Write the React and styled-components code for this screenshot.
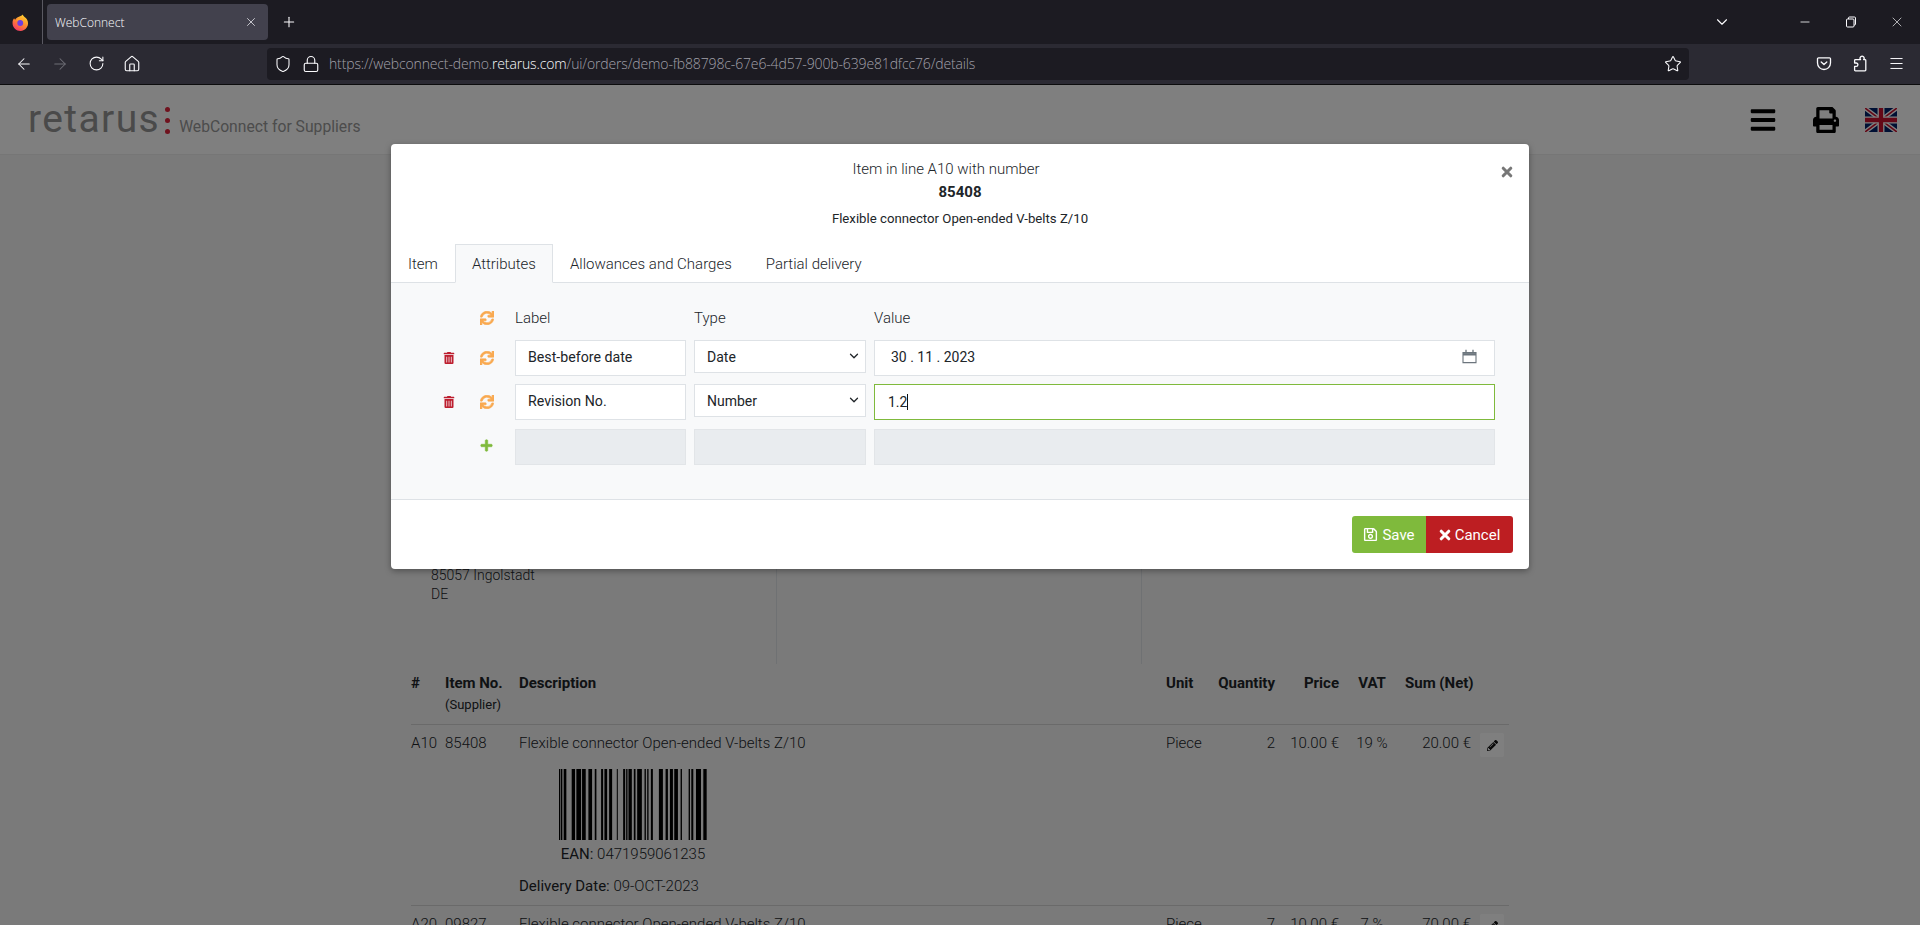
import React from "react";
import styled, { createGlobalStyle } from "styled-components";
import { ArrowLeft, ArrowRight, RotateCw, Home, Shield, Lock, Star, X, Plus, ChevronDown, Minus, Menu } from "lucide-react";
import { FaBars, FaPrint, FaSync, FaTrashAlt, FaPlus, FaRegSave, FaPencilAlt } from "react-icons/fa";

const Global = createGlobalStyle`
  html, body { margin: 0; padding: 0; height: 100%; overflow: hidden; }
  body { font-family: Roboto, "Liberation Sans", sans-serif; font-size: 15px; font-weight: 300; color: #212529; background: #fff; }
  * { box-sizing: border-box; }
`;

const Screen = styled.div`display:flex;flex-direction:column;height:925px;width:1920px;overflow:hidden;`;

/* browser chrome */
const TabBar = styled.div`display:flex;align-items:center;height:44px;background:#1c1b22;color:#fbfbfe;font-family:"Open Sans",sans-serif;flex:none;`;
const BrandSlot = styled.div`width:43px;height:44px;display:flex;align-items:center;justify-content:flex-start;padding-left:12px;border-right:1px solid #5a5962;flex:none;`;
const Tab = styled.div`margin-left:4px;width:221px;height:36px;background:#42414d;border-radius:4px;display:flex;align-items:center;justify-content:space-between;padding:0 10px 0 8px;font-size:12px;flex:none;`;
const TabClose = styled.span`display:flex;color:#e0e0e6;`;
const Slot = styled.div`width:${p => p.$w || 36}px;height:32px;display:flex;align-items:center;justify-content:center;flex:none;color:${p => p.$dim ? "#6f6e77" : "#fbfbfe"};`;
const NewTab = styled(Slot)`margin-left:5px;`;
const WindowControls = styled.div`margin-left:auto;display:flex;align-items:center;`;
const ListTabs = styled(Slot)`margin-right:42px;`;
const NavBar = styled.div`display:flex;align-items:center;height:41px;background:#2b2a33;border-bottom:1px solid #0c0c0d;padding:0 6px 1px;flex:none;font-family:"Open Sans",sans-serif;`;
const UrlBar = styled.div`flex:1;height:32px;margin:0 117px;background:#1c1b22;border-radius:4px;display:flex;align-items:center;color:#fbfbfe;padding-left:7px;`;
const UrlIcon = styled.span`display:flex;width:28px;flex:none;justify-content:flex-start;`;
const UrlText = styled.div`font-size:14px;color:#a2a1aa;letter-spacing:-0.01em;white-space:nowrap;margin-left:-1px;`;
const UrlHost = styled.span`color:#fbfbfe;`;
const UrlStar = styled.span`margin-left:auto;display:flex;margin-right:7px;`;

/* page */
const Page = styled.div`position:relative;flex:1;overflow:hidden;background:#f4f4f4;`;
const SiteHeader = styled.header`height:70px;background:#fff;border-bottom:1px solid #ececec;display:flex;align-items:center;padding:0 23px 0 28px;`;
const Logo = styled.div`display:flex;align-items:flex-end;margin-top:-2px;`;
const LogoWord = styled.span`font-size:39px;line-height:38px;font-weight:400;color:#949494;letter-spacing:1.4px;`;
const LogoDots = styled.span`display:flex;flex-direction:column;gap:6px;margin:0 9px 4px 5px;`;
const LogoDot = styled.i`display:block;width:5px;height:5px;border-radius:50%;background:#e0243c;`;
const LogoTag = styled.span`font-size:15.7px;line-height:22px;font-weight:400;color:#989898;`;
const HeaderTools = styled.div`margin-left:auto;display:flex;align-items:center;gap:36px;color:#000;`;
const PrintTool = styled.span`display:flex;margin-right:-10px;`;

const Main = styled.main`width:1098px;margin:0 auto;background:#f4f4f4;`;
const Addresses = styled.div`display:grid;grid-template-columns:366px 365px 1fr;height:509px;`;
const AddressCol = styled.div`padding:411px 0 0 20px;line-height:19px;font-size:14px;border-right:${p => p.$last ? "0" : "1px solid #dee2e6"};`;
const LineGrid = styled.div`display:grid;grid-template-columns:34px 74px 647px 52px 57px 64px 66px 66px 38px;line-height:21px;border-bottom:1px solid #d4d4d4;padding:${p => p.$head ? "9px 0 8px" : "8px 0"};`;
const HeadCell = styled.div`font-weight:700;text-align:${p => p.$align || "left"};white-space:nowrap;`;
const SumHead = styled(HeadCell)`padding-right:1px;`;
const SubHead = styled.div`font-weight:400;font-size:13px;line-height:22px;`;
const Cell = styled.div`text-align:${p => p.$align || "left"};white-space:nowrap;`;
const Barcode = styled.div`width:228px;margin-top:15px;text-align:center;line-height:21px;`;
const BarSvg = styled.svg`display:block;margin:0 auto 4px;`;
const EanLabel = styled.span`font-weight:400;`;
const DeliveryLine = styled.div`margin-top:11px;`;
const DeliveryLabel = styled.span`font-weight:400;`;
const EditButton = styled.span`display:flex;align-items:center;justify-content:center;width:24px;height:24px;margin-left:9px;background:#fff;border-radius:2px;color:#111;`;

/* modal */
const Overlay = styled.div`position:absolute;inset:0;background:rgba(0,0,0,.5);display:flex;justify-content:center;padding-top:59px;`;
const Modal = styled.div`position:relative;width:1138px;height:425px;background:#fff;border-radius:4px;box-shadow:0 2px 6px rgba(0,0,0,.35);display:flex;flex-direction:column;overflow:hidden;`;
const ModalHead = styled.div`height:100px;padding-top:15px;text-align:center;flex:none;`;
const TitleLine = styled.div`line-height:21px;padding-right:28px;`;
const TitleCode = styled.div`line-height:21px;margin-top:2px;font-weight:700;`;
const TitleDesc = styled.div`font-size:13.2px;line-height:18px;margin-top:7px;font-weight:400;`;
const CloseBtn = styled.span`position:absolute;top:22px;right:16px;display:flex;color:#777;`;
const Tabs = styled.div`display:flex;height:39px;border-bottom:1px solid #dee2e6;flex:none;`;
const TabLink = styled.div`height:39px;padding:0 16px;display:flex;align-items:center;border:1px solid ${p => p.$active ? "#dee2e6" : "transparent"};${p => p.$active ? "border-bottom-color:#f8f9fa;background:#f8f9fa;" : ""}`;
const ModalBody = styled.div`height:217px;background:#f8f9fa;border-bottom:1px solid #dee2e6;padding:24px 0 0 43px;flex:none;`;
const AttrGrid = styled.div`display:grid;grid-template-columns:30px 35px 171px 172px 621px;column-gap:8px;row-gap:8px;grid-template-rows:25px 36px 37px 36px;align-items:start;`;
const ColLabel = styled.div`line-height:22px;`;
const IconCell = styled.div`height:${p => p.$h || 35}px;display:flex;align-items:center;justify-content:${p => p.$pad ? "flex-start" : "center"};padding-left:${p => p.$pad ? 8 : 0}px;color:${p => p.$color};`;
const Field = styled.input`display:block;width:100%;height:36px;border:1px solid #dee2e6;background:#fff;padding:0 12px 2px;font:400 14.2px Roboto,sans-serif;color:#212529;outline:none;`;
const SelectWrap = styled.div`position:relative;height:33px;`;
const Select = styled.select`display:block;width:100%;height:33px;border:1px solid #dee2e6;background:#fff;padding:0 12px;font:400 14px Roboto,sans-serif;color:#212529;appearance:none;outline:none;border-radius:0;`;
const SelectChevron = styled.span`position:absolute;right:5px;top:9px;display:flex;color:#212529;pointer-events:none;`;
const ValueBox = styled.div`height:36px;border:1px solid ${p => p.$focus ? "#7fba3c" : "#dee2e6"};background:#fff;display:flex;align-items:center;justify-content:space-between;padding:0 ${p => p.$focus ? 12 : 17}px ${p => p.$focus ? 0 : 3}px ${p => p.$focus ? 13 : 16}px;font-weight:400;font-size:14px;`;
const Caret = styled.i`display:inline-block;width:1px;height:16px;background:#111;vertical-align:-3px;`;
const Disabled = styled.div`height:36px;background:#e9ecef;border:1px solid #e2e5e8;`;
const ModalFoot = styled.div`flex:1;display:flex;justify-content:flex-end;padding:16px 16px 0 0;`;
const Button = styled.div`height:37px;display:flex;align-items:center;justify-content:center;gap:4px;color:#fff;font-weight:400;font-size:15px;width:${p => p.$w}px;background:${p => p.$bg};border-radius:${p => p.$radius};`;

/* icons */
const Firefox = () => (
  <svg width="17" height="17" viewBox="0 0 32 32">
    <defs>
      <linearGradient id="ffa" x1="0.75" y1="0.05" x2="0.2" y2="1"><stop offset="0" stopColor="#ffd22e"/><stop offset=".5" stopColor="#ff8232"/><stop offset="1" stopColor="#f5306c"/></linearGradient>
    </defs>
    <path d="M20 1c1 4 6 5 8 9 3 5 3 11 0 15-3 5-8 7-12 7C8 32 1 26 1 17c0-4 1-7 3-9 0 1 1 2 2 3 1-3 4-5 7-6 3-1 6-2 7-4z" fill="url(#ffa)"/>
    <circle cx="15.5" cy="17" r="5.5" fill="#6f3fe0"/>
    <path d="M9 13c3-3 9-3 12 0 1 1 2 3 2 5 1-3 1-7-2-9-3-2-7-2-9 0-2 1-3 2-3 4z" fill="#ffab2e"/>
  </svg>
);
const RestoreIcon = () => (
  <svg width="12" height="12" viewBox="0 0 12 12" fill="none" stroke="#fbfbfe" strokeWidth="1">
    <rect x="1.5" y="3" width="7.5" height="8" rx="1"/><path d="M3.5 3V2a1 1 0 0 1 1-1h5a1 1 0 0 1 1 1v6a1 1 0 0 1-1 1h-.5"/>
  </svg>
);
const PocketIcon = () => (
  <svg width="16" height="16" viewBox="0 0 16 16" fill="none" stroke="#fbfbfe" strokeWidth="1.3" strokeLinecap="round" strokeLinejoin="round">
    <path d="M2.5 1.8h11a1 1 0 0 1 1 1V7a6.5 6.5 0 0 1-13 0V2.8a1 1 0 0 1 1-1z"/><path d="M5.2 6l2.8 2.6L10.8 6"/>
  </svg>
);
const PuzzleIcon = () => (
  <svg width="16" height="17" viewBox="0 0 16 17" fill="none" stroke="#fbfbfe" strokeWidth="1.3" strokeLinejoin="round">
    <path d="M8.6 4.6a2 2 0 1 1 3 0h1.4a.8.8 0 0 1 .8.8V15a.8.8 0 0 1-.8.8H3.4a.8.8 0 0 1-.8-.8v-3.6h1.6a1.7 1.7 0 1 0 0-3.4H2.6V5.4a.8.8 0 0 1 .8-.8z"/>
  </svg>
);
const CalendarIcon = () => (
  <svg width="15" height="15" viewBox="0 0 15 15" fill="none" stroke="#6c757d">
    <path d="M1 3.6h13v10H1z" strokeWidth="1.1"/><path d="M1 5.3h13" strokeWidth="2.4"/><path d="M4 .8v2.4M11 .8v2.4" strokeWidth="1.3"/>
  </svg>
);
const ChunkyX = ({ size }) => (
  <svg width={size} height={size} viewBox="0 0 14 14" fill="none" stroke="currentColor" strokeWidth="3.6" strokeLinecap="round">
    <path d="M2.6 2.6l8.8 8.8M11.4 2.6l-8.8 8.8"/>
  </svg>
);
const UkFlag = () => (
  <svg width="32" height="24" viewBox="0 0 60 45">
    <rect width="60" height="45" fill="#012169"/>
    <path d="M0 0l60 45M60 0L0 45" stroke="#fff" strokeWidth="8"/>
    <path d="M0 0l60 45M60 0L0 45" stroke="#c8102e" strokeWidth="3"/>
    <path d="M30 0v45M0 22.5h60" stroke="#fff" strokeWidth="13"/>
    <path d="M30 0v45M0 22.5h60" stroke="#c8102e" strokeWidth="8"/>
  </svg>
);
const BARS = [[0,4],[6,4],[14,8],[38,10],[52,14],[69,11],[88,11],[107,5],[126,6],[136,8],[150,9],[173,3],[192,6],[201,4],[208,10],[224,5],[234,14],[256,4],[264,4],[275,6],[299,12],[319,7],[332,9],[345,11],[364,4],[388,4],[396,6],[410,15],[432,10]];
const EanBars = () => (
  <BarSvg width="148" height="71" viewBox="0 0 443 71" preserveAspectRatio="none">
    {BARS.map(([x, w]) => <rect key={x} x={x} y="0" width={w} height="71" fill="#000" />)}
  </BarSvg>
);

export default function App() {
  return (
    <Screen>
      <Global />
      <TabBar>
        <BrandSlot><Firefox /></BrandSlot>
        <Tab>WebConnect<TabClose><X size={14} strokeWidth={1.4} /></TabClose></Tab>
        <NewTab $w={32}><Plus size={16} strokeWidth={1.6} /></NewTab>
        <WindowControls>
          <ListTabs><ChevronDown size={18} strokeWidth={1.5} /></ListTabs>
          <Slot $w={46}><Minus size={14} strokeWidth={1.4} /></Slot>
          <Slot $w={46}><RestoreIcon /></Slot>
          <Slot $w={46}><X size={16} strokeWidth={1} /></Slot>
        </WindowControls>
      </TabBar>
      <NavBar>
        <Slot><ArrowLeft size={18} strokeWidth={1.4} /></Slot>
        <Slot $dim><ArrowRight size={18} strokeWidth={1.4} /></Slot>
        <Slot><RotateCw size={17} strokeWidth={1.5} /></Slot>
        <Slot><Home size={18} strokeWidth={1.5} /></Slot>
        <UrlBar>
          <UrlIcon><Shield size={18} strokeWidth={1.4} /></UrlIcon>
          <UrlIcon><Lock size={18} strokeWidth={1.5} /></UrlIcon>
          <UrlText>https://webconnect-demo.<UrlHost>retarus.com</UrlHost>/ui/orders/demo-fb88798c-67e6-4d57-900b-639e81dfcc76/details</UrlText>
          <UrlStar><Star size={18} strokeWidth={1.4} /></UrlStar>
        </UrlBar>
        <Slot><PocketIcon /></Slot>
        <Slot><PuzzleIcon /></Slot>
        <Slot><Menu size={17} strokeWidth={1.4} /></Slot>
      </NavBar>
      <Page>
        <SiteHeader>
          <Logo>
            <LogoWord>retarus</LogoWord>
            <LogoDots><LogoDot /><LogoDot /><LogoDot /></LogoDots>
            <LogoTag>WebConnect for Suppliers</LogoTag>
          </Logo>
          <HeaderTools>
            <FaBars size={28} />
            <PrintTool><FaPrint size={26} /></PrintTool>
            <UkFlag />
          </HeaderTools>
        </SiteHeader>
        <Main>
          <Addresses>
            <AddressCol>85057 Ingolstadt<br />DE</AddressCol>
            <AddressCol />
            <AddressCol $last />
          </Addresses>
          <LineGrid $head>
            <HeadCell>#</HeadCell>
            <HeadCell>Item No.<SubHead>(Supplier)</SubHead></HeadCell>
            <HeadCell>Description</HeadCell>
            <HeadCell>Unit</HeadCell>
            <HeadCell $align="right">Quantity</HeadCell>
            <HeadCell $align="right">Price</HeadCell>
            <HeadCell $align="center">VAT</HeadCell>
            <SumHead $align="right">Sum (Net)</SumHead>
            <div />
          </LineGrid>
          <LineGrid>
            <Cell>A10</Cell>
            <Cell>85408</Cell>
            <Cell>
              Flexible connector Open-ended V-belts Z/10
              <Barcode><EanBars /><EanLabel>EAN:</EanLabel> 0471959061235</Barcode>
              <DeliveryLine><DeliveryLabel>Delivery Date:</DeliveryLabel> 09-OCT-2023</DeliveryLine>
            </Cell>
            <Cell>Piece</Cell>
            <Cell $align="right">2</Cell>
            <Cell $align="right">10.00 €</Cell>
            <Cell $align="center">19 %</Cell>
            <Cell $align="right">20.00 €</Cell>
            <Cell><EditButton><FaPencilAlt size={11} /></EditButton></Cell>
          </LineGrid>
          <LineGrid>
            <Cell>A20</Cell>
            <Cell>09827</Cell>
            <Cell>Flexible connector Open-ended V-belts Z/10</Cell>
            <Cell>Piece</Cell>
            <Cell $align="right">7</Cell>
            <Cell $align="right">10.00 €</Cell>
            <Cell $align="center">7 %</Cell>
            <Cell $align="right">70.00 €</Cell>
            <Cell><EditButton><FaPencilAlt size={11} /></EditButton></Cell>
          </LineGrid>
        </Main>
        <Overlay>
          <Modal>
            <ModalHead>
              <TitleLine>Item in line A10 with number</TitleLine>
              <TitleCode>85408</TitleCode>
              <TitleDesc>Flexible connector Open-ended V-belts Z/10</TitleDesc>
            </ModalHead>
            <CloseBtn><ChunkyX size={12} /></CloseBtn>
            <Tabs>
              <TabLink>Item</TabLink>
              <TabLink $active>Attributes</TabLink>
              <TabLink>Allowances and Charges</TabLink>
              <TabLink>Partial delivery</TabLink>
            </Tabs>
            <ModalBody>
              <AttrGrid>
                <div />
                <IconCell $pad $h={22} $color="#f9a950"><FaSync size={14} stroke="currentColor" strokeWidth={24} /></IconCell>
                <ColLabel>Label</ColLabel>
                <ColLabel>Type</ColLabel>
                <ColLabel>Value</ColLabel>

                <IconCell $color="#bd1e2e"><FaTrashAlt size={12} /></IconCell>
                <IconCell $pad $color="#f9a950"><FaSync size={14} stroke="currentColor" strokeWidth={24} /></IconCell>
                <Field readOnly value="Best-before date" />
                <SelectWrap>
                  <Select defaultValue="Date"><option>Date</option><option>Number</option></Select>
                  <SelectChevron><ChevronDown size={14} strokeWidth={2.2} /></SelectChevron>
                </SelectWrap>
                <ValueBox>30 . 11 . 2023<CalendarIcon /></ValueBox>

                <IconCell $color="#bd1e2e"><FaTrashAlt size={12} /></IconCell>
                <IconCell $pad $color="#f9a950"><FaSync size={14} stroke="currentColor" strokeWidth={24} /></IconCell>
                <Field readOnly value="Revision No." />
                <SelectWrap>
                  <Select defaultValue="Number"><option>Date</option><option>Number</option></Select>
                  <SelectChevron><ChevronDown size={14} strokeWidth={2.2} /></SelectChevron>
                </SelectWrap>
                <ValueBox $focus><span>1.2<Caret /></span></ValueBox>

                <div />
                <IconCell $pad $h={33} $color="#7fba3c"><FaPlus size={13} stroke="currentColor" strokeWidth={24} /></IconCell>
                <Disabled />
                <Disabled />
                <Disabled />
              </AttrGrid>
            </ModalBody>
            <ModalFoot>
              <Button $w={74} $bg="#7fba3c" $radius="3px 0 0 3px"><FaRegSave size={15} />Save</Button>
              <Button $w={87} $bg="#bd1e22" $radius="0 3px 3px 0"><ChunkyX size={12} />Cancel</Button>
            </ModalFoot>
          </Modal>
        </Overlay>
      </Page>
    </Screen>
  );
}
